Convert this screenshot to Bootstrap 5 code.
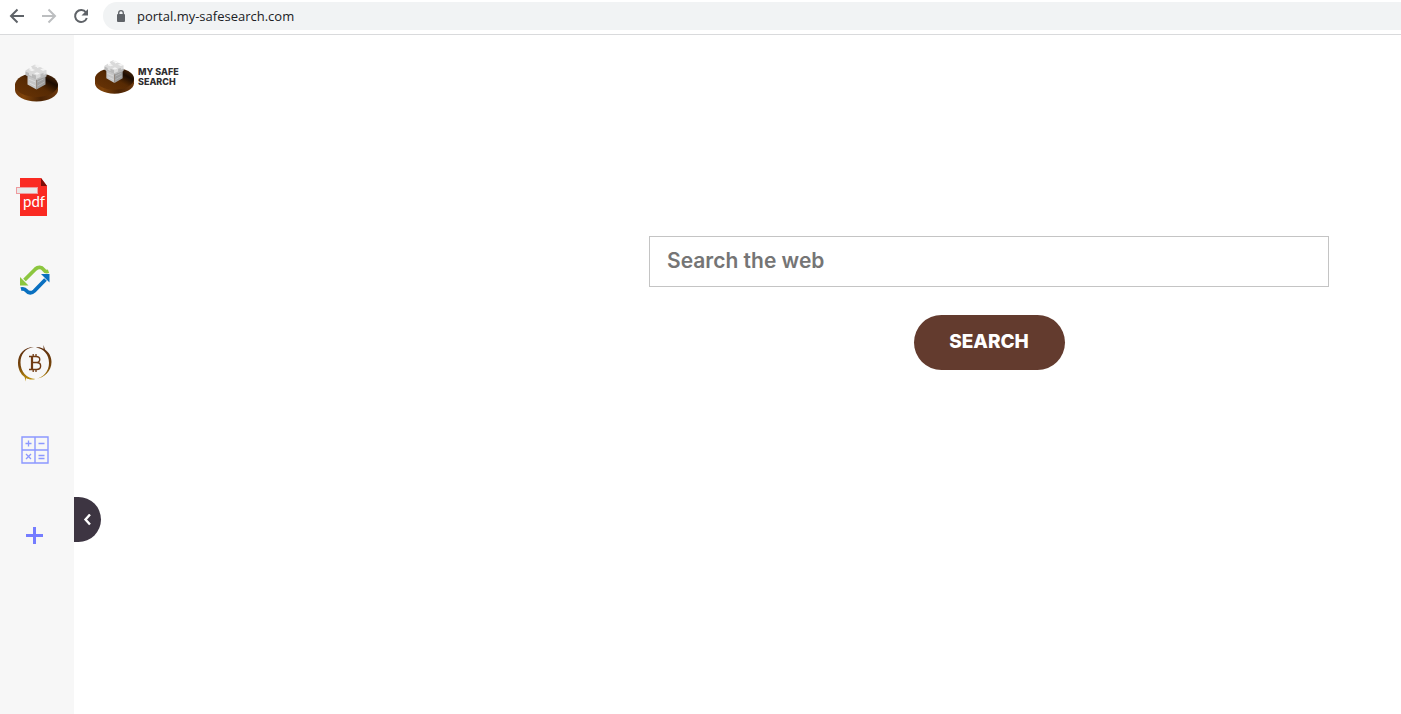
<!DOCTYPE html>
<html lang="en">
<head>
<meta charset="utf-8">
<meta name="viewport" content="width=device-width, initial-scale=1">
<title>My Safe Search</title>
<link href="https://cdn.jsdelivr.net/npm/bootstrap@5.3.0/dist/css/bootstrap.min.css" rel="stylesheet">
<style>
  body { font-family: Inter, sans-serif; background: #fff; }
  .browser-bar { height: 35px; border-bottom: 1px solid #d9dadc; padding: 2px 0 4px 9px; }
  .browser-bar .tool { width: 16px; height: 16px; margin-right: 16px; }
  .browser-bar svg, .side svg, .brand svg { display: block; }
  .address { height: 28px; background: #f1f3f4; border-radius: 14px 0 0 14px; padding-left: 12px; margin-left: -2px; }
  .address input { font: 13px/20px "Open Sans", sans-serif; color: #202124; outline: 0; margin-left: 10px; }
  .side { width: 74px; background: #f7f7f7; }
  .side-logo { padding: 29px 0 0 15px; height: 117px; }
  .side-item { height: 85px; width: 69px; }
  .collapse-tab { left: 74px; top: 462px; width: 27px; height: 45px; background: #3d3542; border-radius: 0 23px 23px 0; }
  .brand { padding: 24px 0 0 21px; height: 60px; font: 800 9px/10px Inter, sans-serif; color: #302e2f; }
  .search-form { width: 680px; max-width: calc(100% - 144px); margin: 141px 72px 0 auto; }
  .search-box { height: 51px; border: 1px solid #c4c4c4; padding: 0 17px 2px; font-size: 21px; font-weight: 600; }
  .search-box::placeholder { color: #757575; opacity: 1; }
  .search-btn { width: 151px; height: 55px; margin-top: 28px; background: #633b2e; color: #fff; font-size: 19px; font-weight: 800; }
  .search-btn:hover { background: #53301f; color: #fff; }
</style>
</head>
<body class="min-vh-100 d-flex flex-column">
<svg width="0" height="0" class="position-absolute" aria-hidden="true">
  <defs>
    <linearGradient id="wood" x1="0" y1="1" x2="1" y2="0"><stop stop-color="#6a3506"/><stop offset=".5" stop-color="#572a03"/><stop offset=".72" stop-color="#1c0c02"/><stop offset="1" stop-color="#6a390f"/></linearGradient>
    <linearGradient id="rim" x1="0" y1="0" x2="1" y2="0"><stop stop-color="#6c3508"/><stop offset=".2" stop-color="#80440a"/><stop offset=".6" stop-color="#4a2304"/><stop offset="1" stop-color="#6b380d"/></linearGradient>
    <linearGradient id="gold" x1="0" y1="0" x2="0" y2="1"><stop stop-color="#5b2c10"/><stop offset=".6" stop-color="#77460b"/><stop offset="1" stop-color="#c79c10"/></linearGradient>
    <symbol id="castle" viewBox="0 0 43 38">
      <path d="M0 20v6c0 6 9.500 11.500 21.500 11.500S43 32 43 26v-6z" fill="url(#rim)"/>
      <ellipse cx="21.500" cy="21" rx="21.500" ry="12" fill="url(#wood)"/>
      <path d="M12.500 10l9 4v11.500l-9-5z" fill="#c6c6c6"/>
      <path d="M21.500 14l9-4v10.500l-9 5z" fill="#9d9d9d"/>
      <path d="M10.500 6.500l4-2.500v2l3-1.500-1.500-2 4-2 2 1.500v2l3-1 3.500 1.500-1 2 4-.5v5L21.500 16l-11-5z" fill="#dadada"/>
      <path d="M10.500 7.500l3.500 1.500v2l3 1.500v-2.500l4 1.500v3.500l4.500-2v-3l3-1v2l3-1.500v3L21.500 16l-11-5z" fill="#b9b9b9"/>
      <path d="M14 6l3 1.200 3-1.200-3-1.200zM19 2l3 1.200 3-1.200-3-1.200zM19 9.500l3 1.200 3-1.200-3-1.200zM25 5.500l3 1.200 3-1.200-3-1.200z" fill="#f3f3f3"/>
      <path d="M13.500 15l7 3M14.500 19l6 3" stroke="#dadada" fill="none"/><path d="M22.500 18l6-3M22.500 22l7-4" stroke="#b5b5b5" fill="none"/>
    </symbol>
  </defs>
</svg>

<header class="browser-bar d-flex align-items-center">
  <button class="tool btn p-0 border-0" aria-label="Back"><svg width="16" height="16" viewBox="0 0 16 16" fill="none" stroke="#5f6368" stroke-width="2"><path d="M15 8H2M8.500 1.500L2 8l6.500 6.500"/></svg></button>
  <button class="tool btn p-0 border-0" aria-label="Forward"><svg width="16" height="16" viewBox="0 0 16 16" fill="none" stroke="#bcbec0" stroke-width="2"><path d="M1 8h13M7.500 1.500L14 8l-6.500 6.500"/></svg></button>
  <button class="tool btn p-0 border-0" aria-label="Reload"><svg width="16" height="16" viewBox="0 0 16 16"><path d="M13 4.500A6 6 0 1 0 13.800 10" fill="none" stroke="#5f6368" stroke-width="2"/><path d="M15 1v6.500H8.500z" fill="#5f6368"/></svg></button>
  <div class="address d-flex align-items-center flex-grow-1">
    <svg width="12" height="14" viewBox="0 0 12 14" aria-hidden="true"><rect x="2" y="5" width="8" height="8" rx="1" fill="#5f6368"/><path d="M3.700 5.500V4a2.300 2.300 0 0 1 4.600 0v1.500" fill="none" stroke="#5f6368" stroke-width="1.300"/></svg>
    <input class="border-0 bg-transparent p-0 flex-grow-1" aria-label="Address" value="portal.my-safesearch.com">
  </div>
</header>

<div class="d-flex flex-grow-1 position-relative">
  <nav class="side flex-shrink-0" aria-label="Tools">
    <a href="#" class="side-logo d-block" aria-label="Home"><svg width="43" height="38"><use href="#castle"/></svg></a>
    <a href="#" class="side-item d-flex align-items-center justify-content-center" aria-label="PDF tools">
      <svg width="40" height="42" viewBox="0 0 40 42"><path d="M5 4h21l6 8v30H5z" fill="#fa2a22"/><path d="M26 4l6 8h-6z" fill="#7d0d08"/><rect x="1.500" y="13.500" width="21" height="6" fill="#e8e8e8" stroke="#ef9a9d"/><text x="8" y="33" font-family="Lato, sans-serif" font-size="15" fill="#fff">pdf</text></svg>
    </a>
    <a href="#" class="side-item d-flex align-items-center justify-content-center" aria-label="Converter">
      <svg width="30" height="30" viewBox="0 0 30 30"><path d="M28.500 6.300C26.500 7 25 6.800 23.500 4.500 21.500 1.700 18 1.700 15.500 4L4.500 15" fill="none" stroke="#8cc63f" stroke-width="3.800"/><path d="M0 12v8.500h8.500z" fill="#8cc63f"/><path d="M1 24.200C3.500 23.500 4.800 23.700 6.300 25.700c2 2.700 5.500 2.700 8 .3L25.500 14.500" fill="none" stroke="#0a70c0" stroke-width="3.800"/><path d="M21 9h8.500v8.500z" fill="#0a70c0"/></svg>
    </a>
    <a href="#" class="side-item d-flex align-items-center justify-content-center" aria-label="Bitcoin">
      <svg width="36" height="40" viewBox="0 0 36 40"><path fill="url(#gold)" fill-rule="evenodd" d="M26.500 4V0l1.500 4.500c4 3 6.500 7 6.500 12.500 0 9-7 16-16 17 8-1.500 13.500-8 13.500-16S27 3.500 19 2.500c2.500-.5 5.500 0 7.500 1.500zM17 2C8 3 3.500 10 3.500 17.500c0 9 6 16 15 16.500-4 1-7 .5-9.500-1v3.500l-1.500-4.500C3.500 29 1 24 1 18 1 9 7 2 17 2z"/><path fill="none" stroke="#703a12" stroke-width="1.400" d="M12 11.500h7c5 0 5 6 0 6h-4 4.500c5.500 0 5.500 7 0 7H12"/><path d="M15 11.500v13" stroke="#703a12" stroke-width="2.200"/><path d="M16.200 9v2.500m2.800-2.500v2.500m-2.800 13V27m2.800-2.500V27" stroke="#703a12" stroke-width="1.300"/></svg>
    </a>
    <a href="#" class="side-item d-flex align-items-center justify-content-center" aria-label="Calculator">
      <svg width="28" height="28" viewBox="0 0 28 28" fill="none" stroke="#8c98ff"><path stroke-width="1.400" d="M1 1h26v26H1zM14 1v26M1 14h26"/><path stroke-width="1.300" d="M7.500 4.500v6M4.500 7.500h6M17.500 7.500h6M5 18l5 5M10 18l-5 5M17.500 19.500h6M17.500 22.500h6"/></svg>
    </a>
    <a href="#" class="side-item d-flex align-items-center justify-content-center" aria-label="Add">
      <svg width="17" height="19" viewBox="0 0 17 19"><path d="M8.500 2v17M0 10.500h17" stroke="#757dff" stroke-width="3"/></svg>
    </a>
  </nav>
  <button class="collapse-tab position-absolute btn border-0 p-0 d-flex align-items-center justify-content-center" aria-label="Collapse sidebar"><svg width="10" height="12" viewBox="0 0 10 12" fill="none" stroke="#fff" stroke-width="2.400"><path d="M7 .500L2.500 5.500 7 10.500"/></svg></button>
  <main class="flex-grow-1">
    <a href="#" class="brand d-flex align-items-center gap-1 text-decoration-none"><svg class="flex-shrink-0" width="39" height="36"><use href="#castle"/></svg><span>MY SAFE<br>SEARCH</span></a>
    <form class="search-form text-center">
      <input type="search" class="search-box form-control rounded-0" aria-label="Search the web" placeholder="Search the web">
      <button type="submit" class="search-btn btn rounded-pill border-0 p-0">SEARCH</button>
    </form>
  </main>
</div>
<script src="https://cdn.jsdelivr.net/npm/bootstrap@5.3.0/dist/js/bootstrap.bundle.min.js"></script>
</body>
</html>
